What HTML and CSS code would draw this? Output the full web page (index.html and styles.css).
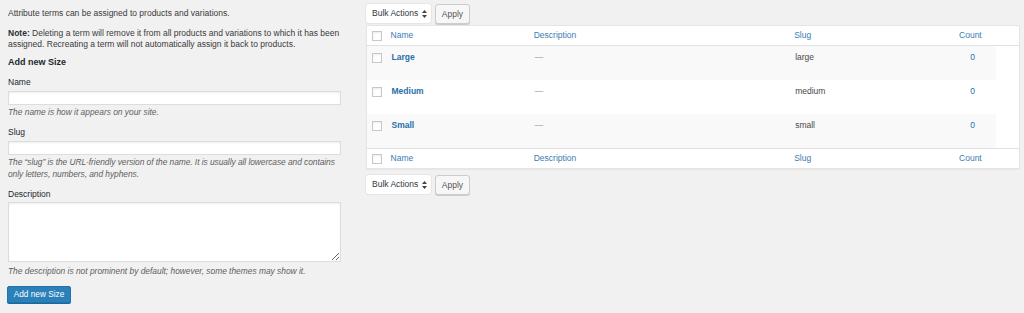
FILE: index.html
```html
<!DOCTYPE html>
<html lang="en">
<head>
<meta charset="utf-8">
<title>Size terms</title>
<link rel="stylesheet" href="styles.css">
</head>
<body>
<div class="wrap">
  <div class="col-left">
    <p class="intro">Attribute terms can be assigned to products and variations.</p>
    <p class="note"><strong>Note:</strong> Deleting a term will remove it from all products and variations to which it has been assigned. Recreating a term will not automatically assign it back to products.</p>
    <h2 class="form-title">Add new Size</h2>
    <div class="field field-name">
      <label class="label">Name</label>
      <input class="text-input" type="text">
      <p class="help">The name is how it appears on your site.</p>
    </div>
    <div class="field field-slug">
      <label class="label">Slug</label>
      <input class="text-input" type="text">
      <p class="help help-wrap">The “slug” is the URL-friendly version of the name. It is usually all lowercase and contains only letters, numbers, and hyphens.</p>
    </div>
    <div class="field field-desc">
      <label class="label">Description</label>
      <textarea class="textarea"></textarea>
      <p class="help help-desc">The description is not prominent by default; however, some themes may show it.</p>
    </div>
    <button class="btn-primary" type="button">Add new Size</button>
  </div>

  <div class="col-right">
    <div class="tablenav tablenav-top">
      <div class="select">Bulk Actions<svg class="arrows" width="5" height="8" viewBox="0 0 5 8"><path d="M2.5 0 L5 3 L0 3 Z M0 5 L5 5 L2.5 8 Z" fill="#444"/></svg></div>
      <div class="btn">Apply</div>
    </div>
    <table class="terms">
      <colgroup>
        <col class="c-cb"><col class="c-name"><col class="c-desc"><col class="c-slug"><col class="c-count"><col class="c-spacer">
      </colgroup>
      <thead>
        <tr><th class="cb"><span class="check"></span></th><th>Name</th><th>Description</th><th>Slug</th><th class="count">Count</th><th class="spacer"></th></tr>
      </thead>
      <tbody>
        <tr class="alt"><td class="cb"><span class="check"></span></td><td class="name">Large</td><td class="dash">—</td><td class="slug">large</td><td class="num">0</td><td class="spacer"></td></tr>
        <tr><td class="cb"><span class="check"></span></td><td class="name">Medium</td><td class="dash">—</td><td class="slug">medium</td><td class="num">0</td><td class="spacer"></td></tr>
        <tr class="alt"><td class="cb"><span class="check"></span></td><td class="name">Small</td><td class="dash">—</td><td class="slug">small</td><td class="num">0</td><td class="spacer"></td></tr>
      </tbody>
      <tfoot>
        <tr><th class="cb"><span class="check"></span></th><th>Name</th><th>Description</th><th>Slug</th><th class="count">Count</th><th class="spacer"></th></tr>
      </tfoot>
    </table>
    <div class="tablenav tablenav-bottom">
      <div class="select">Bulk Actions<svg class="arrows" width="5" height="8" viewBox="0 0 5 8"><path d="M2.5 0 L5 3 L0 3 Z M0 5 L5 5 L2.5 8 Z" fill="#444"/></svg></div>
      <div class="btn">Apply</div>
    </div>
  </div>
</div>
</body>
</html>
```

FILE: styles.css
```css
html, body {
  margin: 0;
  padding: 0;
  background: #f1f1f1;
}
body {
  font-family: "Liberation Sans", Arial, sans-serif;
  font-size: 8.5px;
  line-height: 11px;
  color: #3a3a3a;
  width: 1024px;
  height: 313px;
  overflow: hidden;
}
.wrap {
  display: flex;
  align-items: flex-start;
}
.col-left {
  width: 333px;
  margin-left: 8px;
  padding-top: 7.5px;
}
.col-right {
  width: 654px;
  margin-left: 25px;
}
p { margin: 0; }
.note { margin-top: 9px; }
.note strong { font-weight: bold; color: #2a2e33; }
.form-title {
  margin: 6px 0 0;
  font-size: 9px;
  line-height: 12px;
  font-weight: bold;
  color: #23282d;
}
.label {
  display: block;
  color: #23282d;
  line-height: 11px;
}
.field-name { margin-top: 9px; }
.field-slug { margin-top: 8.5px; }
.field-desc { margin-top: 8.5px; }
.text-input {
  display: block;
  box-sizing: border-box;
  width: 333px;
  height: 14px;
  margin: 3.5px 0 0;
  padding: 0;
  border: 1px solid #ddd;
  background: #fff;
  box-shadow: inset 0 1px 2px rgba(0,0,0,.07);
  outline: none;
}
.textarea {
  display: block;
  box-sizing: border-box;
  width: 333px;
  height: 60px;
  margin: 2px 0 0;
  padding: 0;
  border: 1px solid #ddd;
  background: #fff;
  box-shadow: inset 0 1px 2px rgba(0,0,0,.07);
  resize: both;
  outline: none;
}
.help {
  margin-top: 2px;
  font-style: italic;
  font-size: 8.4px;
  color: #5e5e5e;
}
.help-wrap { line-height: 11.5px; margin-top: 2.25px; letter-spacing: -0.05px; }
.help-desc { margin-top: 4px; }
.btn-primary {
  display: block;
  margin: 9.5px 0 0 -1px;
  box-sizing: border-box;
  width: 64px;
  height: 17px;
  padding: 0;
  border: 1px solid #1f73aa;
  border-radius: 2px;
  background: #2b80b9;
  box-shadow: 0 1px 0 #1c6a9c;
  color: #fff;
  font-family: "Liberation Sans", Arial, sans-serif;
  font-size: 8.3px;
  line-height: 15px;
  text-align: center;
}

/* right column */
.tablenav {
  display: flex;
  align-items: flex-start;
  gap: 4px;
}
.tablenav-top { padding-top: 4px; height: 21px; }
.tablenav-bottom { margin-top: 6px; }
.select {
  box-sizing: border-box;
  width: 65px;
  height: 19px;
  background: #fff;
  border-radius: 3px;
  box-shadow: 0 0 0 1px #e6e6e6, 0 1px 1px rgba(0,0,0,.06);
  padding-left: 6px;
  line-height: 19px;
  color: #32373c;
  display: flex;
  align-items: center;
}
.arrows { margin-left: 4px; }
.btn {
  box-sizing: border-box;
  width: 35px;
  height: 20px;
  border: 1px solid #ccc;
  border-radius: 3px;
  background: #f7f7f7;
  box-shadow: 0 1px 0 #ccc;
  color: #555;
  text-align: center;
  line-height: 18px;
}
.terms {
  table-layout: fixed;
  border-collapse: collapse;
  width: 654px;
  background: #fff;
  border: 1px solid #e5e5e5;
  box-shadow: 0 1px 1px rgba(0,0,0,.04);
}
.c-cb { width: 20px; }
.c-name { width: 143px; }
.c-desc { width: 260px; }
.c-slug { width: 154px; }
.c-count { width: 52px; }
.c-spacer { width: 23px; }
.terms th {
  font-weight: normal;
  text-align: left;
  color: #3a7cb2;
  padding: 4px 0 4px 4px;
  line-height: 11px;
  vertical-align: top;
}
.terms thead th { border-bottom: 1px solid #e1e1e1; }
.terms tfoot th { border-top: 1px solid #e1e1e1; }
.terms th.count { text-align: center; padding-left: 0; }
.terms th.cb { padding: 4.5px 0 0 5px; }
.terms td {
  padding: 6px 0 17px 5px;
  line-height: 11px;
  vertical-align: top;
  color: #4a4a4a;
}
.terms td.cb { padding: 7px 0 0 5px; }
.terms tr.alt td { background: #f9f9f9; }
.terms tr.alt td.spacer { background: #fff; }
.terms td.name { font-weight: bold; color: #2a6fa8; }
.terms td.dash { color: #8c8c8c; }
.terms td.num { text-align: center; color: #2a6fa8; padding-left: 4.6px; }
.check {
  display: block;
  box-sizing: border-box;
  width: 10px;
  height: 10px;
  border: 1px solid #c6c9cc;
  background: #fff;
  box-shadow: inset 0 1px 2px rgba(0,0,0,.08);
}
```
